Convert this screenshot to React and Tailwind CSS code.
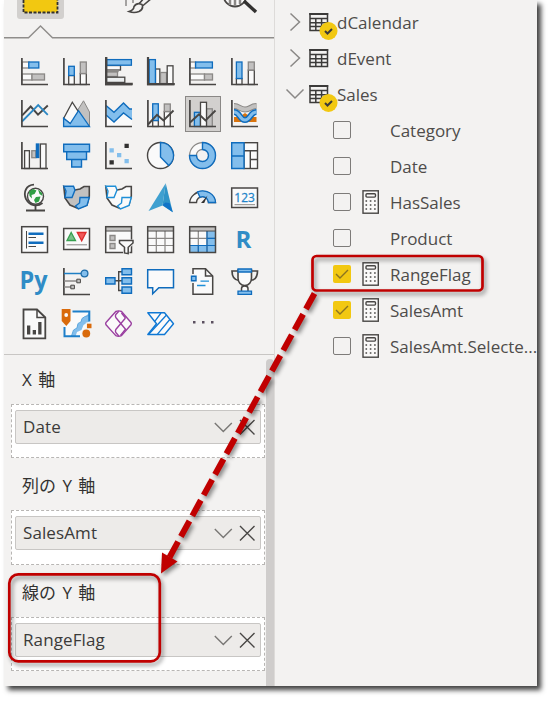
const DARK = "#484644";
const BLUE = "#0f6cbd";
const SKY = "#83beec";
const GREY = "#c2c1c0";
const MID = "#8a8886";
const PAPER = "#fafafa";

// x, y, width, height, fill, stroke
const Bar = ({ b }) => (
  <rect x={b[0]} y={b[1]} width={b[2]} height={b[3]} fill={b[4]} stroke={b[5]} strokeWidth="1.3" />
);

const Axis = () => <path d="M.9 0V26.5H27" fill="none" stroke={DARK} strokeWidth="1.7" />;

const BarChart = ({ bars, line, children }) => (
  <>
    {bars.map((b, i) => (
      <Bar key={i} b={b} />
    ))}
    {line && <path d={line} fill="none" stroke={DARK} strokeWidth="1.9" />}
    {children}
    <Axis />
  </>
);

const Grid = () => (
  <path d="M9.3 5V26.5M18 5V26.5M.7 12.3H26.3M.7 19.5H26.3" stroke={MID} strokeWidth="1.2" />
);

const TableFrame = () => (
  <>
    <rect x=".7" y=".7" width="25.8" height="4" fill={GREY} />
    <path d="M.7 5H26.5" stroke={DARK} />
    <rect x=".7" y=".7" width="25.8" height="25.8" fill="none" stroke={DARK} strokeWidth="1.5" />
  </>
);

const icons = [
  <BarChart
    bars={[
      [1, 4, 7, 6, PAPER, MID],
      [7.8, 4, 10, 6, SKY, BLUE],
      [1, 16, 10, 6, PAPER, MID],
      [11, 16, 12.5, 6, GREY, MID],
    ]}
  />,
  <BarChart
    bars={[
      [5.7, 17.5, 5.6, 9, PAPER, DARK],
      [5.7, 8.3, 5.6, 9.2, SKY, BLUE],
      [17.3, 15.5, 6, 11, PAPER, DARK],
      [17.3, 4, 6, 11.5, GREY, MID],
    ]}
  />,
  <BarChart
    bars={[
      [1, 7.5, 14.5, 4.5, PAPER, DARK],
      [1, 12.5, 12, 1, MID, MID],
      [1, 14, 11.5, 4.5, GREY, MID],
      [1, 19.2, 18.8, 5.2, "#eceff0", DARK],
      [1.6, 1.6, 24.8, 5.6, SKY, BLUE],
    ]}
  >
    <path d="M1.2 -1V26H27.8" fill="none" stroke={DARK} strokeWidth="2.4" />
  </BarChart>,
  <BarChart
    bars={[
      [8.5, 11, 4.3, 15, PAPER, DARK],
      [13.5, 14.5, 6, 11, GREY, MID],
      [20.2, 7.8, 5.8, 18, PAPER, DARK],
      [2.2, 1.6, 6.2, 24, SKY, BLUE],
    ]}
  >
    <path d="M1 -1V26.2H27.8" fill="none" stroke={DARK} strokeWidth="2.2" />
  </BarChart>,
  <BarChart
    bars={[
      [1, 4, 5.5, 6, PAPER, MID],
      [6.6, 4, 16.8, 6, SKY, BLUE],
      [1, 16, 14.5, 6, PAPER, MID],
      [15.5, 16, 8, 6, GREY, MID],
    ]}
  />,
  <BarChart
    bars={[
      [5.4, 20.5, 5.6, 6, PAPER, DARK],
      [5.4, 4, 5.6, 16.5, SKY, BLUE],
      [17.3, 12, 6, 14.5, PAPER, DARK],
      [17.3, 4, 6, 8, GREY, MID],
    ]}
  />,

  <BarChart bars={[]} line="M1 15.7 9.7 6.5 17 14.7 26.8 5.5">
    <path d="M1 21.5 17.2 5 26.8 14.8" fill="none" stroke="#2b87c3" strokeWidth="1.8" />
  </BarChart>,
  <>
    <path d="M13.5 12 20.5 .8 26.5 12V26.5Z" fill={GREY} stroke={MID} />
    <path d="M.6 18.5 9.3 2.2 17.5 15 7.5 24Z" fill={PAPER} stroke={DARK} strokeWidth="1.3" />
    <path d="M.6 26.5V18.2L7.2 23.5 15.5 10.6 26.5 26.5Z" fill={SKY} stroke={BLUE} strokeWidth="1.3" />
  </>,
  <BarChart bars={[]}>
    <path d="M1 12 9 20 18.5 11 27 18V26.5H1Z" fill={PAPER} />
    <path d="M1 5.5 9 12.2 18.5 3 24.6 9H27V19.5L18.5 13 9 22 1 15Z" fill={SKY} />
    <path d="M1 5.5 9 12.2 18.5 3 24.6 9H27M1 15 9 22 18.5 13 27 19.5" fill="none" stroke={BLUE} strokeWidth="1.4" />
  </BarChart>,
  <BarChart
    bars={[
      [5.7, 20.5, 5.6, 6, PAPER, DARK],
      [5.7, 3.8, 5.6, 16.7, SKY, BLUE],
      [17.3, 11.5, 6, 15, PAPER, DARK],
      [17.3, 4, 6, 7.5, GREY, MID],
    ]}
    line="M1 24.5 10 14.8 16.5 20.5 26.5 10.5"
  />,
  <BarChart
    bars={[
      [5.4, 12.3, 6, 14.2, SKY, BLUE],
      [17.5, 8.8, 5.8, 17.7, GREY, MID],
      [11.5, 2.3, 6, 24.2, PAPER, DARK],
    ]}
    line="M1 22.5 10 14.2 16.5 20.5 26.5 10.5"
  />,
  <BarChart bars={[]}>
    <path d="M3 19.5H9L14 16 19 19.5H25.5" fill="none" stroke="#d9730d" strokeWidth="5" />
    <path d="M3 6C8 6 9 9.5 14 9.5S20 6 25.5 6" fill="none" stroke={MID} strokeWidth="6" />
    <path d="M3 6C8 6 9 9.5 14 9.5S20 6 25.5 6" fill="none" stroke={GREY} strokeWidth="3.8" />
    <path d="M3 12C9 12 8.5 20 14 20S19 12 25.5 12" fill="none" stroke={BLUE} strokeWidth="6" />
    <path d="M3 12C9 12 8.5 20 14 20S19 12 25.5 12" fill="none" stroke={SKY} strokeWidth="3" />
  </BarChart>,

  <BarChart
    bars={[
      [3.6, 8.7, 4.8, 17.8, PAPER, DARK],
      [10.8, 8.7, 4, 7, GREY, MID],
      [15.4, 2, 2.4, 13.5, BLUE, BLUE],
      [19.4, 2, 5.6, 24.5, PAPER, DARK],
    ]}
  />,
  <g fill={SKY} stroke={BLUE} strokeWidth="1.4">
    <path d="M.7 2.3H26.5V9.7H.7ZM3.7 9.7H23.5V17.5H3.7ZM8.7 17.5H18.5V25H8.7Z" />
  </g>,
  <BarChart bars={[]}>
    <path d="M4.5 6.3H8.8V10.6H4.5ZM12 11H16.3V15.3H12ZM19.5 17H23.8V21.3H19.5Z" fill={SKY} />
    <path d="M19.5 1.8H23.8V6.1H19.5ZM4.5 18.2H8.8V22.5H4.5Z" fill="#323130" />
  </BarChart>,
  <>
    <circle cx="13.5" cy="13.5" r="13" fill={PAPER} stroke={DARK} strokeWidth="1.4" />
    <path d="M13.5 .5A13 13 0 0 1 21.8 23.5L13.5 15Z" fill={SKY} stroke={BLUE} strokeWidth="1.4" />
  </>,
  <>
    <circle cx="13.5" cy="13.5" r="9.5" fill="none" stroke={MID} strokeWidth="8" />
    <circle cx="13.5" cy="13.5" r="9.5" fill="none" stroke={PAPER} strokeWidth="5.5" />
    <path d="M13.5 .5A13 13 0 1 1 .5 13.5H7.5A6 6 0 1 0 13.5 7.5Z" fill={SKY} stroke={BLUE} strokeWidth="1.4" />
  </>,
  <>
    <rect x="13" y=".7" width="13.5" height="25.8" fill={PAPER} stroke={DARK} strokeWidth="1.4" />
    <path d="M13 8.7H26.5M19.3 8.7V26.5M19.3 17.5H26.5" stroke={DARK} strokeWidth="1.4" />
    <path d="M.7 .7H13V26.5H.7ZM.7 14H13" fill={SKY} stroke={BLUE} strokeWidth="1.4" />
  </>,

  <>
    <circle cx="14.5" cy="12.3" r="8" fill={PAPER} stroke={DARK} strokeWidth="1.4" />
    <path d="M8 7.5 12 5 15.5 6.5 13.5 10 10.5 11 11 14.5 8.5 12ZM17 5.5 21 9 21.5 12 18.5 10ZM15 13 19.5 12.5 18 17.5 14.5 19 13 16Z" fill="#2f9e44" />
    <path d="M13 .7C5 1 2 8.5 5 15 8.5 21.5 16 23.5 21.5 19M14.5 22V26.5M5 26.5H24" fill="none" stroke={DARK} strokeWidth="1.8" />
  </>,
  <>
    <path d="M.8 2.5 12 6 17 5 21 2.5H26.3V12L24 21 15 24.5 7 21 2 14Z" fill={GREY} stroke={DARK} strokeWidth="1.6" />
    <path d="M.8 2.3H10.5L12 6 9 13.5H2L3 7Z" fill={SKY} stroke={BLUE} strokeWidth="1.4" />
    <path d="M17 13.5H26.3L24 21.5 15.5 25 12.5 22 16.5 19Z" fill={SKY} stroke={BLUE} strokeWidth="1.4" />
  </>,
  <>
    <path d="M.8 2.5 12 6 17 5 21 2.5H26.3V12L24 21 15 24.5 7 21 2 14Z" fill={PAPER} stroke={DARK} strokeWidth="1.6" />
    <path d="M.8 2.3H10.5L12 6 9 13.5H2L3 7Z" fill={PAPER} stroke="#1e8fd8" strokeWidth="1.4" />
    <path d="M17 13.5H26.3L24 21.5 15.5 25 12.5 22 16.5 19Z" fill={PAPER} stroke="#1e8fd8" strokeWidth="1.4" />
  </>,
  <>
    <path d="M18.7 -.8 1.5 27 15.5 21.5Z" fill="#3fa0d0" />
    <path d="M18.7 -.8 15.5 21.5 25.8 28.3Z" fill="#2f94c8" />
    <path d="M15.5 21 18.5 18.5 22.5 19 25.8 28.3Z" fill="#1173c7" />
  </>,
  <>
    <path d="M.6 18.5A13 12 0 0 1 26.5 18.5H19.5A6 6 0 0 0 7.5 18.5Z" fill={PAPER} stroke={DARK} strokeWidth="1.4" />
    <path d="M8.5 7.8A13 12 0 0 1 26.5 18.5H19.5A6 6 0 0 0 11 13.3Z" fill={SKY} stroke={BLUE} strokeWidth="1.3" />
    <path d="M18.5 11.5 15.2 19H12Z" fill="#323130" />
  </>,
  <>
    <rect x=".7" y="4" width="25.8" height="19.5" fill={PAPER} stroke={DARK} strokeWidth="1.5" />
    <path d="M3.5 20.7H24" stroke={MID} />
    <text x="3.3" y="17.5" fontSize="13.5" textLength="20.5" lengthAdjust="spacingAndGlyphs" fill="#1f84c9" stroke="#1f84c9" strokeWidth=".3">123</text>
  </>,

  <>
    <rect x=".7" y=".7" width="25.8" height="25.8" fill={PAPER} stroke={DARK} strokeWidth="1.5" />
    <path d="M5.5 5V22.5M7.5 11.5H15M7.5 20.5H15" stroke={DARK} />
    <path d="M7.5 7.7H22.5M7.5 16.7H22.5" stroke={BLUE} strokeWidth="2.5" />
  </>,
  <>
    <rect x=".7" y="2.5" width="25.8" height="21" fill={PAPER} stroke={DARK} strokeWidth="1.5" />
    <path d="M3.5 18.8H24" stroke={MID} />
    <path d="M8.2 6.5 12.5 14.5H4Z" fill="#7bbf8b" stroke="#37a04f" strokeWidth="1.3" />
    <path d="M14.3 6.5H23L18.7 14.8Z" fill="#f05a5a" stroke="#dd2c2c" strokeWidth="1.3" />
  </>,
  <>
    <rect x=".7" y=".7" width="25.8" height="25.8" fill={PAPER} />
    <TableFrame />
    <path d="M5 9.5H10V14.5H5ZM5 17.5H10V22.5H5Z" fill={GREY} stroke={MID} strokeWidth="1.3" />
    <path d="M13.5 13.5H29V18L24.5 22V28.5H18V22L13.5 18Z" fill="#f3f2f1" />
    <path d="M14.5 14.5H28V17L23.2 21.3V27.7L19.5 27V21.3L14.5 17Z" fill={PAPER} stroke={DARK} strokeWidth="1.5" />
  </>,
  <>
    <rect x=".7" y=".7" width="25.8" height="25.8" fill={PAPER} />
    <Grid />
    <TableFrame />
  </>,
  <>
    <rect x=".7" y=".7" width="25.8" height="25.8" fill={PAPER} />
    <path d="M18 5H26.5V26.5H.7V19.5H18Z" fill={SKY} />
    <Grid />
    <path d="M18 5V26.5M18 12.3H26.5M.7 19.5H26.5M9.3 19.5V26.5" stroke={BLUE} strokeWidth="1.2" />
    <TableFrame />
  </>,
  <text x="12.5" y="22" fontSize="24" fontWeight="700" textAnchor="middle" fill="#2f8cc6">R</text>,

  <text x="-1.5" y="20.5" fontSize="25" fontWeight="700" textLength="28" lengthAdjust="spacingAndGlyphs" fill="#2f8cc6">Py</text>,
  <>
    <Axis />
    <path d="M1 13H13.5M1 19H8" stroke={MID} strokeWidth="1.3" />
    <path d="M1 5.5H18" stroke="#1e7fc4" strokeWidth="1.5" />
    <circle cx="21.5" cy="5.5" r="3.4" fill={SKY} stroke="#1e6ca8" strokeWidth="1.3" />
    <path d="M13.8 11.2H17.4V14.8H13.8ZM7.8 17.2H11.4V20.8H7.8Z" fill={GREY} stroke={DARK} />
  </>,
  <>
    <path d="M10 12.8H17M17 3.8H13.7V22.5H17" fill="none" stroke={DARK} strokeWidth="1.4" />
    <path d="M.7 9.7H10V16H.7ZM17 .7H26.5V6.8H17ZM17 9.7H26.5V16H17ZM17 19H26.5V25.3H17Z" fill={SKY} stroke={BLUE} strokeWidth="1.4" />
  </>,
  <path d="M.7 1.8H26.5V19.7H11.8L5.7 25.8V19.7H.7Z" fill={PAPER} stroke={BLUE} strokeWidth="1.5" />,
  <>
    <path d="M4 .7H16.5L23.7 8V26.3H4Z" fill={PAPER} stroke={DARK} strokeWidth="1.5" />
    <path d="M16.5 .7V8H23.7" fill="none" stroke={DARK} strokeWidth="1.5" />
    <path d="M1.5 6H6V15H1.5Z" fill="#f3f2f1" />
    <path d="M2.5 8.3H7V12.8H2.5Z" fill={SKY} stroke={BLUE} strokeWidth="1.4" />
    <path d="M11.5 13.2H20M8 17.5H16.5" stroke="#1e8fd8" strokeWidth="1.3" />
  </>,
  <>
    <path d="M7 3H1C1 8.5 3 12 8 12.5M20.5 3H26.5C26.5 8.5 24.5 12 19.5 12.5" fill="none" stroke={DARK} strokeWidth="1.7" />
    <path d="M7 2H20.5V10C20.5 14 18 17.5 13.8 17.5S7 14 7 10Z" fill={PAPER} stroke={DARK} strokeWidth="1.6" />
    <path d="M7 1H20.5V4H7Z" fill={SKY} stroke={BLUE} strokeWidth="1.3" />
    <path d="M10.5 23V20.5C10.5 19 12 18 13.8 18S17 19 17 20.5V23" fill={PAPER} stroke={DARK} strokeWidth="1.5" />
    <path d="M7 23.2H20.5V26.3H7Z" fill={SKY} stroke={BLUE} strokeWidth="1.3" />
  </>,

  <>
    <path d="M2.5 -.5H16L24.3 7.5V28.3H2.5Z" fill={PAPER} stroke={DARK} strokeWidth="1.8" />
    <path d="M16 -.5V7.5H24.3" fill="none" stroke={DARK} strokeWidth="1.5" />
    <path d="M6 15.5H9.3V24.5H6ZM11.7 20H15V24.5H11.7ZM17.2 12H20.5V24.5H17.2Z" fill={DARK} />
  </>,
  <>
    <path d="M1.5 14V26.5H26V2H9L6 14Z" fill={PAPER} />
    <path d="M26 3V11.5L20.5 15 18.5 20 14 22 12.5 26.5H8.5L10.5 20.5 14 18 15 14 18 12 19 8.5 22.5 6.5Z" fill={SKY} />
    <path d="M26 5.5 22 6.5 19 8.5 18 12 15 13.5 14 18 10.5 20 8.5 26" fill="none" stroke="#5ba7de" />
    <path d="M1.5 17V26.3H17M9.5 1.5H26.3V11.5" fill="none" stroke="#1e7fc9" strokeWidth="2" />
    <path d="M-1.3 -1H7.5V11L3.3 16 -1.3 11Z" fill="#d96a0b" />
    <circle cx="3.2" cy="5" r="1.9" fill={PAPER} />
    <circle cx="23.3" cy="23.5" r="5" fill="#f3f2f1" />
    <circle cx="23.3" cy="23.5" r="3.9" fill="#d96a0b" />
    <rect x="22.8" y="12.5" width="6.2" height="6.5" fill="#f3f2f1" />
    <rect x="24" y="13.7" width="4.5" height="4.5" fill="#d96a0b" />
  </>,
  <g fill="none" stroke="#9a3fa0" strokeWidth="1.4" strokeLinejoin="round">
    <path d="M10.8 1.5 1 12.5Q.3 13.6 1 14.8L10.8 25.6Q13.7 26.8 16.5 25.6L26 14.8Q26.7 13.6 26 12.5L16.5 1.5Q13.7 .3 10.8 1.5Z" fill={PAPER} />
    <path d="M13.8 1.2 10.8 4.5Q10 6 10.8 7.5L20.5 19.2 15.5 25.5M20.5 8 10.8 19.5Q10 21 10.8 22.5L13.8 26M20.5 8 16.5 3" />
  </g>,
  <g fill={PAPER} stroke="#0f78d4" strokeWidth="1.4" strokeLinejoin="round">
    <path d="M.8 2.8H17.5L26.5 13.7 17.5 24.5H.8L9.5 13.7Z" />
    <path d="M7.8 11.3 14 3M2 24 19.3 5.2M10.5 24.2 22.8 9.5" strokeWidth="1.3" />
  </g>,
  <g fill="#5b5060">
    <path d="M4 11H6.5V13.5H4ZM13 11H15.5V13.5H13ZM22 11H24.5V13.5H22Z" />
  </g>,
];

const Visuals = () => (
  <div className="grid grid-cols-6 w-[252px] ml-[10px] pt-[12px] h-[315px] content-start">
    {icons.map((icon, i) => (
      <div key={i} className="w-[42px] h-[42px] flex items-center justify-center">
        <div
          className={
            i === 10
              ? "w-9 h-9 flex items-center justify-center bg-[#d2d0ce] border border-[#8a8886]"
              : "w-9 h-9 flex items-center justify-center"
          }
        >
          <svg width="28" height="28" viewBox="0 0 28 28" className="overflow-visible shrink-0">
            {icon}
          </svg>
        </div>
      </div>
    ))}
  </div>
);

const Tabs = () => (
  <div className="h-[39px] shrink-0">
    <svg width="270" height="39" viewBox="4 0 270 39">
      <path d="M17 -4H64V16Q64 19 61 19H20Q17 19 17 16Z" fill="#d2d0ce" />
      <rect x="23.5" y="-5" width="34" height="17.5" fill="#f2c811" />
      <path d="M23.5 0V12.5H57.5V0" fill="none" stroke="#323130" strokeWidth="1.8" strokeDasharray="3 1.5" />
      <path d="M126 0V6M133 0V3" stroke={MID} strokeWidth="1.5" />
      <path d="M129 11.5Q134 10 134 6.5Q137 2 142 4.5Q144 9 139 11.5Q134 13.5 129 11.5ZM139 4 144 -2M142.5 6 152 -2" fill="#f3f2f1" stroke={DARK} strokeWidth="1.6" />
      <circle cx="235" cy="-5" r="11.5" fill={PAPER} stroke={DARK} strokeWidth="1.8" />
      <path d="M230 0V5M235 0V6M240 0V4" stroke={MID} strokeWidth="2.5" />
      <path d="M244 1 256 12" stroke="#323130" strokeWidth="3.4" />
      <path d="M4 37.7H28.5L40.5 26 52.5 37.7H275" fill="none" stroke="#8f8d8b" strokeWidth="1.4" />
    </svg>
  </div>
);

const Well = ({ label, value }) => (
  <div className="h-[106.6px]">
    <div className="h-[48.5px] pl-[18px] flex items-center text-[17px] [word-spacing:2px] text-[#323130]">
      {label}
    </div>
    <div className="ml-[7px] w-[254px] h-[54.5px] bg-white border border-dashed border-[#b8b6b4] pt-[5px] pl-[3px]">
      <div className="w-[246px] h-[34px] flex items-center bg-[#edebe9] border border-[#c8c6c4] rounded-[2px] pl-[7px] pr-[4px]">
        <span className="flex-1 text-[17px] tracking-[0.1px] text-[#3b3a39]">{value}</span>
        <svg width="42" height="18" viewBox="0 0 42 18" fill="none" stroke="#797775" strokeWidth="1.4">
          <path d="M.8 5 9.3 13.5 17.8 5" />
          <path d="M26 2 40.5 16.5M40.5 2 26 16.5" stroke="#484644" />
        </svg>
      </div>
    </div>
  </div>
);

const Chevron = ({ open }) => (
  <svg width="20" height="20" viewBox="0 0 20 20" fill="none" stroke="#8a8886" strokeWidth="1.5" className="shrink-0">
    <path d={open ? "M1.5 5.5 10 14 18.5 5.5" : "M5.5 1.5 14.5 10 5.5 18.5"} />
  </svg>
);

const TableRow = ({ name, open, badge }) => (
  <div className="h-9 flex items-center pl-[10px]">
    <Chevron open={open} />
    <svg width="32" height="36" viewBox="0 0 32 36" className="ml-[2px] shrink-0">
      <path d="M3 9.8H20.5V26.5H3ZM3 14.5H20.5M3 18.7H20.5M3 22.6H20.5M8.8 14.5V26.5M14.6 14.5V26.5" fill="none" stroke="#3b3a39" strokeWidth="1.5" />
      <path d="M2.3 10H21.2" stroke="#3b3a39" strokeWidth="2" />
      {badge && (
        <>
          <circle cx="21.5" cy="27" r="9" fill="#f2c811" />
          <path d="M18 27 20.5 29.5 25 25" fill="none" stroke="#3b3a39" strokeWidth="2" />
        </>
      )}
    </svg>
    <span className="-ml-[2px] pt-[2px] text-[17px] text-[#4e4c4a]">{name}</span>
  </div>
);

const Calculator = () => (
  <svg width="18" height="24" viewBox="0 0 18 24">
    <rect x="1" y=".8" width="15.3" height="22.4" fill="#faf9f8" stroke="#484644" strokeWidth="1.4" />
    <rect x="4" y="3.8" width="9.5" height="3.3" rx="1" fill="none" stroke="#484644" strokeWidth="1.4" />
    <path d="M3.5 11H15M3.5 15H15M3.5 19H15" stroke="#484644" strokeWidth="1.6" strokeDasharray="1.6 2.7" />
  </svg>
);

const FieldRow = ({ name, checked, measure }) => (
  <div className="h-9 flex items-center pl-[58px]">
    <div
      className={
        checked
          ? "w-[18px] h-[18px] shrink-0 rounded-[2px] bg-[#f2c811]"
          : "w-[18px] h-[18px] shrink-0 rounded-[2px] border border-[#7d7b79]"
      }
    >
      {checked && (
        <svg width="18" height="18" viewBox="0 0 18 18" fill="none" stroke="#8b7420" strokeWidth="1.4">
          <path d="M3 9 7 13 15 5" />
        </svg>
      )}
    </div>
    <div className="w-[18px] ml-[11px] mr-[10px] shrink-0">{measure && <Calculator />}</div>
    <span className="pt-[2px] text-[17px] tracking-[-0.02px] text-[#4e4c4a] whitespace-nowrap">{name}</span>
  </div>
);

const tables = [
  { name: "dCalendar", badge: true },
  { name: "dEvent" },
  { name: "Sales", open: true, badge: true },
];

const fields = [
  { name: "Category" },
  { name: "Date" },
  { name: "HasSales", measure: true },
  { name: "Product" },
  { name: "RangeFlag", measure: true, checked: true },
  { name: "SalesAmt", measure: true, checked: true },
  { name: "SalesAmt.Selecte...", measure: true },
];

const Annotations = () => (
  <svg
    width="552"
    height="701"
    viewBox="0 0 552 701"
    className="absolute left-0 top-0 drop-shadow-[2px_3px_2px_rgba(0,0,0,0.45)]"
  >
    <g fill="none" stroke="#c00000">
      <rect x="312.5" y="256" width="170" height="34.5" rx="4" strokeWidth="2.7" />
      <rect x="9.3" y="574.3" width="150.5" height="87" rx="9" strokeWidth="2.7" />
      <path d="M314.5 293.5 168 560" strokeWidth="6" strokeDasharray="17.7 5.9" />
    </g>
    <path d="M161 573.5 162 552.5 177.5 561.5Z" fill="#c00000" />
  </svg>
);

export default function App() {
  return (
    <div className="relative w-[552px] h-[701px] overflow-hidden bg-white font-['Open_Sans','Noto_Sans_CJK_JP',sans-serif]">
      <div className="ml-1 w-[533px] h-[686px] flex bg-[#f3f2f1] shadow-[4px_4px_5px_0px_rgba(0,0,0,0.75)]">
        <div className="w-[271px] h-full flex flex-col shrink-0 border-r border-[#dddbd9]">
          <Tabs />
          <Visuals />
          <div className="flex-1 flex border-t border-[#c8c6c4] overflow-hidden">
            <div className="w-[262px] shrink-0">
              <Well label="X 軸" value="Date" />
              <Well label="列の Y 軸" value="SalesAmt" />
              <Well label="線の Y 軸" value="RangeFlag" />
            </div>
            <div className="flex-1 mt-1 bg-[#cfcdcc] rounded-t-[4px]" />
          </div>
        </div>
        <div className="flex-1 pt-1">
          {tables.map((t) => (
            <TableRow key={t.name} {...t} />
          ))}
          {fields.map((f) => (
            <FieldRow key={f.name} {...f} />
          ))}
        </div>
      </div>
      <Annotations />
    </div>
  );
}
